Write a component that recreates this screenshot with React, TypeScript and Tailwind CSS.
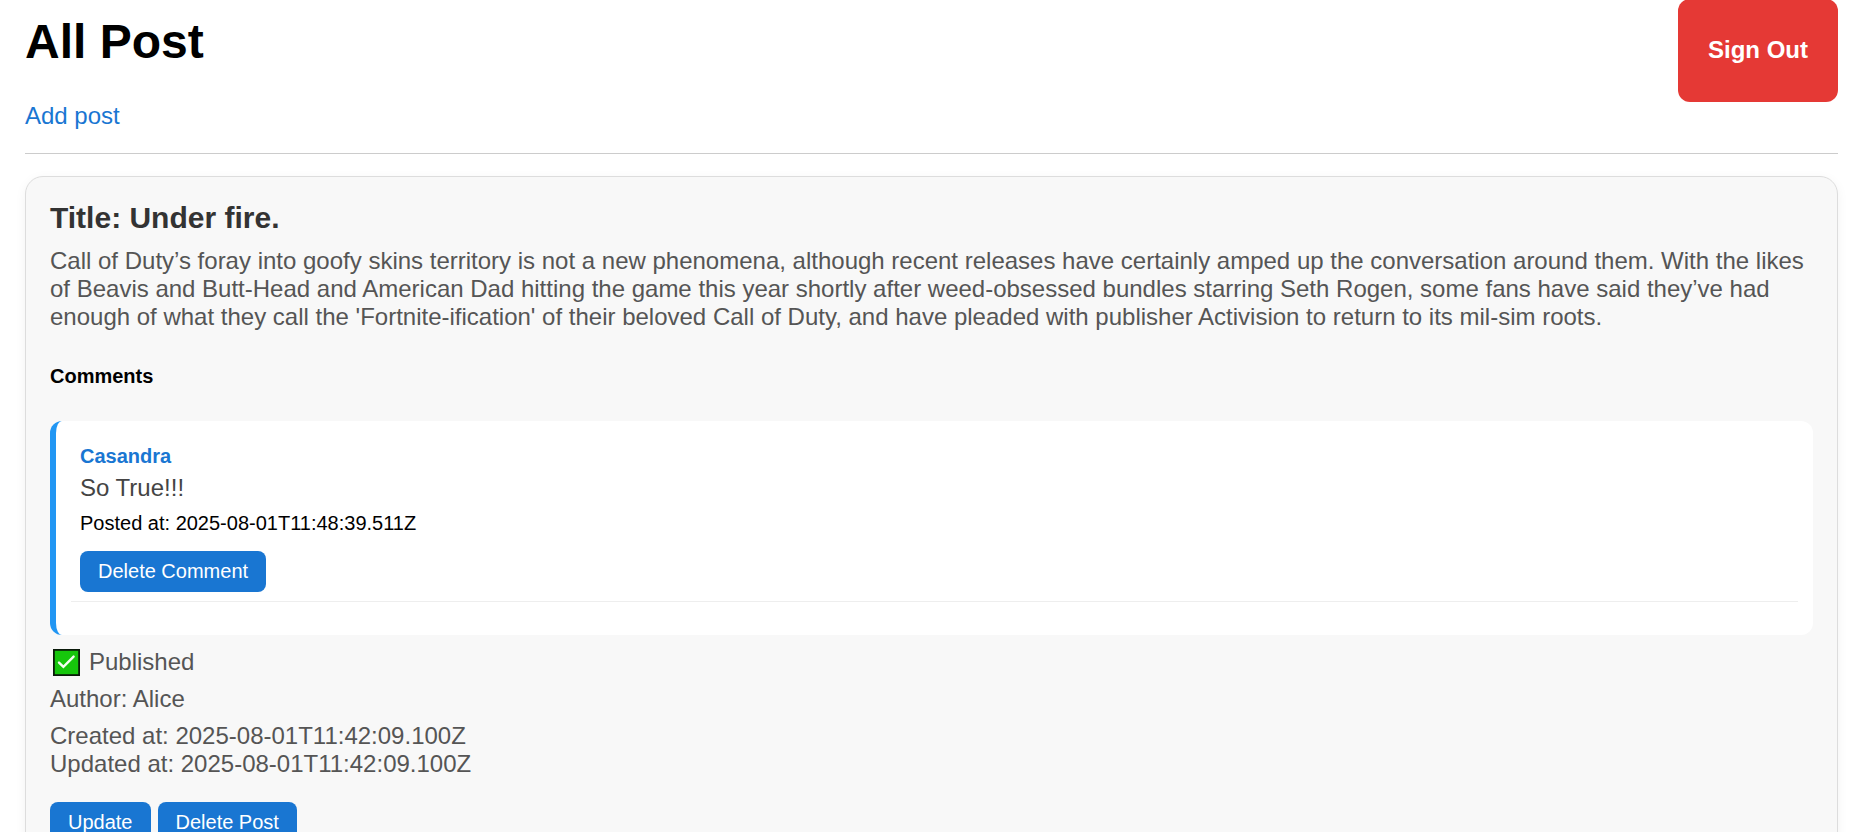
import React from "react";

type PostComment = { author: string; body: string; postedAt: string };

const comments: PostComment[] = [
  { author: "Casandra", body: "So True!!!", postedAt: "2025-08-01T11:48:39.511Z" },
];

function ActionButton({ children }: { children: React.ReactNode }) {
  return (
    <button type="button" className="rounded-lg bg-[#1976d2] px-[18px] py-2 text-[20px] leading-[25px] text-white">
      {children}
    </button>
  );
}

function CheckMark() {
  return (
    <svg viewBox="0 0 27 27" className="ml-[3px] size-[27px]" aria-hidden="true">
      <rect x="0.9" y="0.9" width="25.2" height="25.2" fill="#16c60c" stroke="#0a1a0a" strokeWidth="1.8" />
      <path d="M6 13.6l4.4 4.3L20.6 7.6" fill="none" stroke="#f4fff2" strokeWidth="2.4" strokeLinecap="round" />
    </svg>
  );
}

function CommentItem({ comment }: { comment: PostComment }) {
  return (
    <li className="rounded-xl border-l-[6px] border-[#2196f3] bg-white pt-[23px] pr-[15px] pb-[33px] pl-[15px]">
      <div className="flex flex-col items-start border-b border-[#eeeeee] px-[9px] pb-[9px]">
        <p className="text-[20px] leading-[24px] font-bold text-[#1976d2]">{comment.author}</p>
        <p className="mt-[6px] text-[24px] leading-[28px] text-[#444444]">{comment.body}</p>
        <p className="mt-[9px] mb-4 text-[20px] leading-[24px] text-black">Posted at: {comment.postedAt}</p>
        <ActionButton>Delete Comment</ActionButton>
      </div>
    </li>
  );
}

export default function App() {
  return (
    <div className="min-h-screen overflow-x-hidden bg-white pr-[26px] pb-8 pl-[25px] font-['Liberation_Sans',Arial,sans-serif]">
      <header className="flex items-start justify-between border-b border-[#cccccc] pb-[23px]">
        <div>
          <h1 className="mt-[14px] text-[48px] leading-[56px] font-bold text-black">All Post</h1>
          <a href="#add" className="mt-8 block text-[24px] leading-[28px] text-[#1976d2]">
            Add post
          </a>
        </div>
        <button
          type="button"
          className="-mt-px rounded-xl bg-[#e53935] px-[30px] pt-[35px] pb-[37px] text-[24px] leading-[31px] font-bold text-white"
        >
          Sign Out
        </button>
      </header>

      <main className="mt-[22px]">
        <article className="rounded-[18px] border border-[#dddddd] bg-[#f8f8f8] p-6 text-[24px] leading-[28px] text-[#555555] shadow-[0_3px_12px_rgba(0,0,0,0.05)]">
          <h2 className="text-[30px] leading-[34px] font-bold text-[#333333]">Title: Under fire.</h2>
          <p className="mt-3">
            Call of Duty’s foray into goofy skins territory is not a new phenomena, although recent releases have
            certainly amped up the conversation around them. With the likes of Beavis and Butt-Head and American Dad
            hitting the game this year shortly after weed-obsessed bundles starring Seth Rogen, some fans have said
            they’ve had enough of what they call the 'Fortnite-ification' of their beloved Call of Duty, and have
            pleaded with publisher Activision to return to its mil-sim roots.
          </p>
          <h3 className="mt-[33px] text-[20px] leading-[24px] font-bold text-black">Comments</h3>
          <ul className="mt-[33px]">
            {comments.map((comment) => (
              <CommentItem key={comment.postedAt} comment={comment} />
            ))}
          </ul>
          <p className="mt-[13px] flex items-center gap-[9px]">
            <CheckMark />
            <span>Published</span>
          </p>
          <p className="mt-[9px]">Author: Alice</p>
          <p className="mt-[9px]">Created at: 2025-08-01T11:42:09.100Z</p>
          <p>Updated at: 2025-08-01T11:42:09.100Z</p>
          <div className="mt-6 flex gap-[7px]">
            <ActionButton>Update</ActionButton>
            <ActionButton>Delete Post</ActionButton>
          </div>
        </article>
      </main>
    </div>
  );
}
